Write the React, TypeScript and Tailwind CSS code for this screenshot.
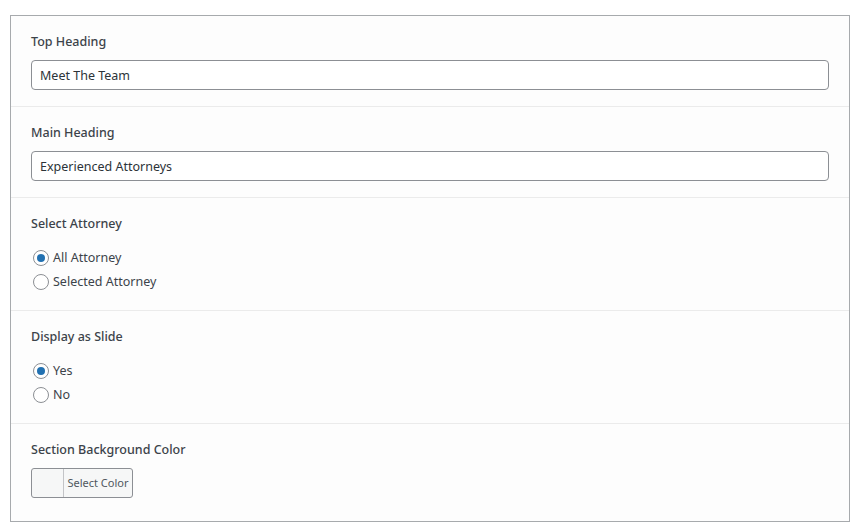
import React from "react";

const font = { fontFamily: '"Segoe UI", "Noto Sans", sans-serif' };

function Label({ children }: { children: React.ReactNode }) {
  return (
    <p className="text-[12.5px] leading-5 font-medium text-[#3c434a]">{children}</p>
  );
}

function TextField({ label, value }: { label: string; value: string }) {
  return (
    <div className="px-5 pt-4 pb-4 border-b border-[#ebebeb]">
      <Label>{label}</Label>
      <input
        readOnly
        value={value}
        className="mt-2 w-full h-[30px] px-2 rounded-[4px] border border-[#8c8f94] bg-white text-[12.5px] text-[#2c3338] outline-none"
      />
    </div>
  );
}

function Radio({ checked, label }: { checked?: boolean; label: string }) {
  return (
    <label className="flex items-center h-6 gap-[4px] pl-[2px] text-[12.5px] text-[#3c434a]">
      <span className="w-4 h-4 rounded-full border border-[#8c8f94] bg-white flex items-center justify-center">
        {checked && <span className="w-2 h-2 rounded-full bg-[#2271b1]" />}
      </span>
      {label}
    </label>
  );
}

function RadioGroup({ label, options }: { label: string; options: string[] }) {
  return (
    <div className="px-5 pt-4 pb-4 border-b border-[#ebebeb]">
      <Label>{label}</Label>
      <div className="mt-3 flex flex-col">
        {options.map((o, i) => (
          <Radio key={o} label={o} checked={i === 0} />
        ))}
      </div>
    </div>
  );
}

export default function App() {
  return (
    <div className="bg-white w-[864px] h-[529px] pt-[15px] pl-[10px]" style={font}>
      <div className="w-[840px] border border-[#a7aaad] bg-[#fdfdfd]">
        <TextField label="Top Heading" value="Meet The Team" />
        <TextField label="Main Heading" value="Experienced Attorneys" />
        <RadioGroup label="Select Attorney" options={["All Attorney", "Selected Attorney"]} />
        <RadioGroup label="Display as Slide" options={["Yes", "No"]} />
        <div className="px-5 pt-4 pb-[23px]">
          <Label>Section Background Color</Label>
          <div className="mt-2 flex w-[102px] h-[30px] rounded-[3px] border border-[#8c8f94] bg-[#f6f7f7] overflow-hidden">
            <span className="w-8 border-r border-[#c3c4c7]" />
            <span className="flex-1 flex items-center justify-center text-[11px] text-[#50575e]">
              Select Color
            </span>
          </div>
        </div>
      </div>
    </div>
  );
}
